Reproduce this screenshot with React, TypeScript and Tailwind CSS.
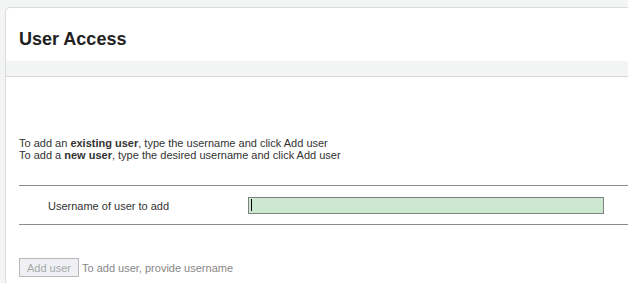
export default function App() {
  return (
    <div
      className="w-[628px] h-[283px] overflow-hidden bg-[#f3f4f4] pt-[7px] pl-[5px]"
      style={{ fontFamily: '"Liberation Sans", Arial, sans-serif' }}
    >
      <div className="h-full bg-white border-l border-t border-[#dcdcdc] rounded-tl-[5px]">
        <div className="h-[53px] flex items-end pl-[13px] pb-[12px]">
          <h1 className="text-[18px] leading-[20px] font-bold text-[#222]">User Access</h1>
        </div>
        <div className="h-[16px] bg-[#f3f4f4] border-b border-[#d6d6d6]" />
        <div className="pl-[13px] pt-[60px] text-[11px] leading-[12px] text-[#333]">
          <p>
            To add an <b>existing user</b>, type the username and click Add user
          </p>
          <p>
            To add a <b>new user</b>, type the desired username and click Add user
          </p>
          <div className="mt-[24px] border-t border-b border-[#8c8c8c] h-[40px] flex items-center">
            <div className="w-[229px] pl-[29px] pt-[1px]">Username of user to add</div>
            <div className="w-[356px] h-[17px] bg-[#cce8d1] border border-[#808080] flex items-center pl-[2px]">
              <div className="w-px h-[12px] bg-black" />
            </div>
          </div>
          <div className="mt-[33px] flex items-center">
            <div className="w-[60px] h-[19px] border border-[#b8b8b8] bg-[#eef0f4] text-[#a8a8a8] flex items-center justify-center">
              Add user
            </div>
            <span className="ml-[3px] text-[#888]">To add user, provide username</span>
          </div>
        </div>
      </div>
    </div>
  );
}
